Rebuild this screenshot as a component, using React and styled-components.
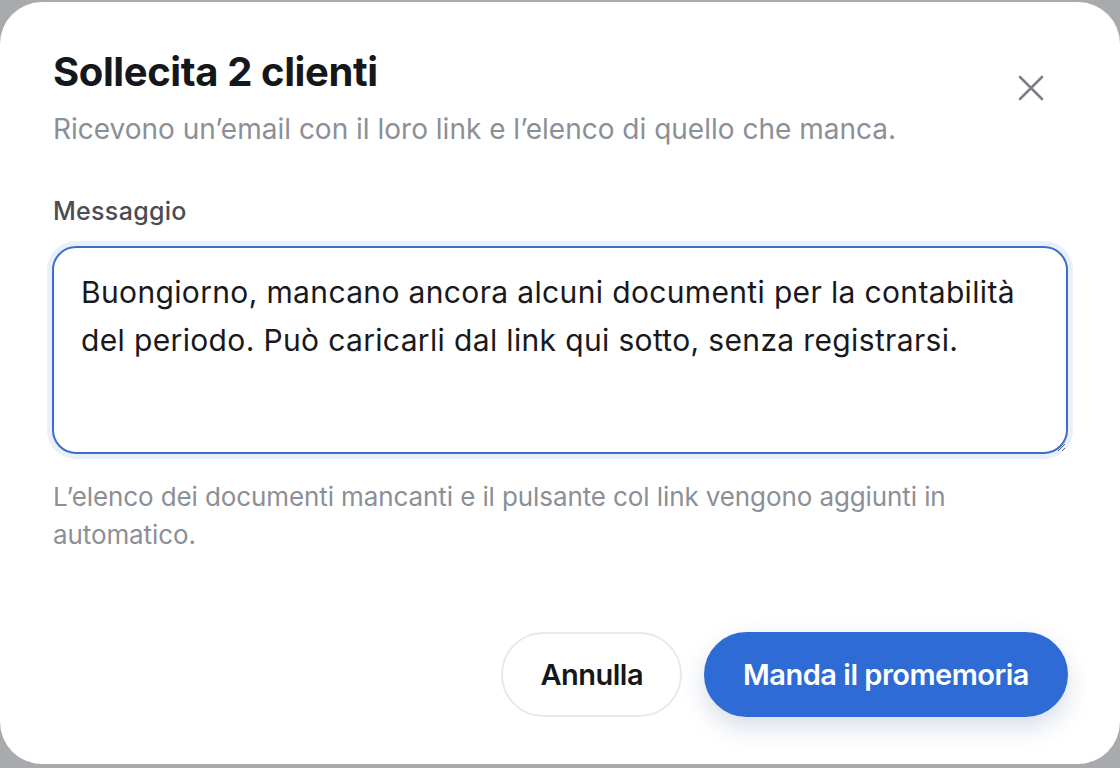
import styled, { createGlobalStyle } from 'styled-components';

const GlobalStyle = createGlobalStyle`
    html, body {
        margin: 0;
        padding: 0;
        background: #a9aaad;
        font-family: Inter, "Noto Sans", sans-serif;
        -webkit-font-smoothing: antialiased;
    }
`;

const App = () => {
    return (
        <>
            <GlobalStyle />
            <Backdrop>
                <Dialog role="dialog" aria-labelledby="dlg-title">
                    <Header>
                        <div>
                            <Title id="dlg-title">Sollecita 2 clienti</Title>
                            <Subtitle>Ricevono un’email con il loro link e l’elenco di quello che manca.</Subtitle>
                        </div>
                        <CloseButton aria-label="Chiudi">
                            <svg width="32" height="32" viewBox="0 0 32 32" fill="none" stroke="currentColor" strokeWidth="2.6" strokeLinecap="round">
                                <path d="M5 5l22 22M27 5L5 27" />
                            </svg>
                        </CloseButton>
                    </Header>

                    <Field>
                        <Label htmlFor="msg">Messaggio</Label>
                        <TextArea
                            id="msg"
                            defaultValue="Buongiorno, mancano ancora alcuni documenti per la contabilità del periodo. Può caricarli dal link qui sotto, senza registrarsi."
                        />
                        <Hint>L’elenco dei documenti mancanti e il pulsante col link vengono aggiunti in automatico.</Hint>
                    </Field>

                    <Footer>
                        <Button>Annulla</Button>
                        <Button primary>Manda il promemoria</Button>
                    </Footer>
                </Dialog>
            </Backdrop>
        </>
    );
}

const Backdrop = styled.div`
    width: 1120px;
    height: 768px;
    padding-top: 2px;
    box-sizing: border-box;
    overflow: hidden;
`;

const Dialog = styled.div`
    box-sizing: border-box;
    width: 1120px;
    height: 762px;
    background: #ffffff;
    border-radius: 42px;
    padding: 46px 52px 47px 53px;
    display: flex;
    flex-direction: column;
`;

const Header = styled.div`
    display: flex;
    justify-content: space-between;
    align-items: flex-start;
`;

const Title = styled.h2`
    margin: 0;
    font-size: 40px;
    line-height: 48px;
    font-weight: 700;
    letter-spacing: -0.4px;
    color: #16171a;
`;

const Subtitle = styled.p`
    margin: 13px 0 0;
    font-size: 28px;
    line-height: 40px;
    color: #8b8f97;
`;

const CloseButton = styled.button`
    border: none;
    background: none;
    padding: 0;
    margin: 24px 21px 0 0;
    color: #7d8088;
    display: flex;
    cursor: pointer;
`;

const Field = styled.div`
    display: flex;
    flex-direction: column;
    margin-top: 46px;
`;

const Label = styled.label`
    font-size: 25px;
    line-height: 32px;
    font-weight: 500;
    letter-spacing: 0.3px;
    color: #4a4d55;
    margin-bottom: 19px;
`;

const TextArea = styled.textarea`
    box-sizing: border-box;
    width: 1016px;
    height: 208px;
    margin-left: -1px;
    padding: 20px 27px;
    border: 2px solid #3a6fcb;
    border-radius: 24px;
    box-shadow: 0 0 0 5px #e9f0fb;
    font-family: Inter, "Noto Sans", sans-serif;
    font-size: 30px;
    line-height: 48px;
    letter-spacing: 0.35px;
    color: #18191c;
    resize: vertical;
    outline: none;
`;

const Hint = styled.p`
    margin: 24px 0 0;
    font-size: 26px;
    line-height: 38px;
    letter-spacing: -0.1px;
    color: #8b8f97;
`;

const Footer = styled.div`
    margin-top: auto;
    display: flex;
    justify-content: flex-end;
    gap: 22px;
`;

const Button = styled.button`
    box-sizing: border-box;
    height: 85px;
    padding: 0 37px;
    border-radius: 999px;
    font-family: Inter, "Noto Sans", sans-serif;
    font-size: 29px;
    font-weight: 600;
    letter-spacing: -0.5px;
    cursor: pointer;
    border: 2px solid ${p => p.primary ? '#2e6bd5' : '#e8e9ec'};
    background: ${p => p.primary ? '#2e6bd5' : '#ffffff'};
    color: ${p => p.primary ? '#ffffff' : '#16171a'};
    box-shadow: ${p => p.primary ? '0 10px 24px rgba(30, 60, 120, 0.18)' : 'none'};
`;

export default App;
